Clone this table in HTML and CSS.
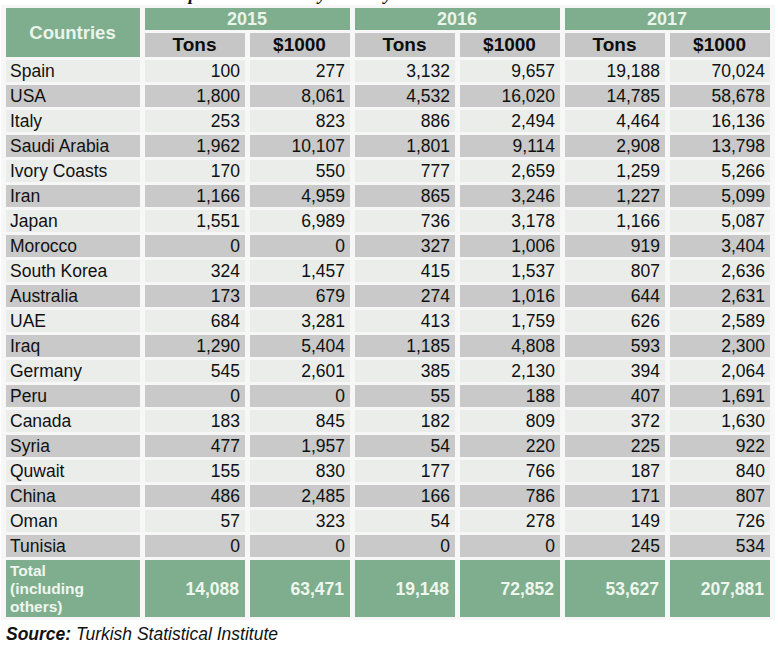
FILE: index.html
```html
<!DOCTYPE html>
<html>
<head>
<meta charset="utf-8">
<link rel="stylesheet" href="styles.css">
</head>
<body>
<div class="page">
  <div class="title"><span>Table 3. Exports and Value by Country</span></div>
  <table class="exports">
    <colgroup>
      <col class="col-country">
      <col class="col-data"><col class="col-data">
      <col class="col-data"><col class="col-data">
      <col class="col-data"><col class="col-data">
    </colgroup>
    <thead>
      <tr>
        <th rowspan="2" class="head-green countries">Countries</th>
        <th colspan="2" class="head-green year">2015</th>
        <th colspan="2" class="head-green year">2016</th>
        <th colspan="2" class="head-green year">2017</th>
      </tr>
      <tr class="sub">
        <th>Tons</th><th>$1000</th>
        <th>Tons</th><th>$1000</th>
        <th>Tons</th><th>$1000</th>
      </tr>
    </thead>
    <tbody>
      <tr class="light"><td>Spain</td><td>100</td><td>277</td><td>3,132</td><td>9,657</td><td>19,188</td><td>70,024</td></tr>
      <tr class="dark"><td>USA</td><td>1,800</td><td>8,061</td><td>4,532</td><td>16,020</td><td>14,785</td><td>58,678</td></tr>
      <tr class="light"><td>Italy</td><td>253</td><td>823</td><td>886</td><td>2,494</td><td>4,464</td><td>16,136</td></tr>
      <tr class="dark"><td>Saudi Arabia</td><td>1,962</td><td>10,107</td><td>1,801</td><td>9,114</td><td>2,908</td><td>13,798</td></tr>
      <tr class="light"><td>Ivory Coasts</td><td>170</td><td>550</td><td>777</td><td>2,659</td><td>1,259</td><td>5,266</td></tr>
      <tr class="dark"><td>Iran</td><td>1,166</td><td>4,959</td><td>865</td><td>3,246</td><td>1,227</td><td>5,099</td></tr>
      <tr class="light"><td>Japan</td><td>1,551</td><td>6,989</td><td>736</td><td>3,178</td><td>1,166</td><td>5,087</td></tr>
      <tr class="dark"><td>Morocco</td><td>0</td><td>0</td><td>327</td><td>1,006</td><td>919</td><td>3,404</td></tr>
      <tr class="light"><td>South Korea</td><td>324</td><td>1,457</td><td>415</td><td>1,537</td><td>807</td><td>2,636</td></tr>
      <tr class="dark"><td>Australia</td><td>173</td><td>679</td><td>274</td><td>1,016</td><td>644</td><td>2,631</td></tr>
      <tr class="light"><td>UAE</td><td>684</td><td>3,281</td><td>413</td><td>1,759</td><td>626</td><td>2,589</td></tr>
      <tr class="dark"><td>Iraq</td><td>1,290</td><td>5,404</td><td>1,185</td><td>4,808</td><td>593</td><td>2,300</td></tr>
      <tr class="light"><td>Germany</td><td>545</td><td>2,601</td><td>385</td><td>2,130</td><td>394</td><td>2,064</td></tr>
      <tr class="dark"><td>Peru</td><td>0</td><td>0</td><td>55</td><td>188</td><td>407</td><td>1,691</td></tr>
      <tr class="light"><td>Canada</td><td>183</td><td>845</td><td>182</td><td>809</td><td>372</td><td>1,630</td></tr>
      <tr class="dark"><td>Syria</td><td>477</td><td>1,957</td><td>54</td><td>220</td><td>225</td><td>922</td></tr>
      <tr class="light"><td>Quwait</td><td>155</td><td>830</td><td>177</td><td>766</td><td>187</td><td>840</td></tr>
      <tr class="dark"><td>China</td><td>486</td><td>2,485</td><td>166</td><td>786</td><td>171</td><td>807</td></tr>
      <tr class="light"><td>Oman</td><td>57</td><td>323</td><td>54</td><td>278</td><td>149</td><td>726</td></tr>
      <tr class="dark"><td>Tunisia</td><td>0</td><td>0</td><td>0</td><td>0</td><td>245</td><td>534</td></tr>
      <tr class="total"><td>Total<br>(including<br>others)</td><td>14,088</td><td>63,471</td><td>19,148</td><td>72,852</td><td>53,627</td><td>207,881</td></tr>
    </tbody>
  </table>
  <p class="source"><b>Source:</b> Turkish Statistical Institute</p>
</div>
</body>
</html>
```

FILE: styles.css
```css
html, body {
  margin: 0;
  padding: 0;
  background: #ffffff;
}

.page {
  width: 777px;
  padding-left: 1px;
  font-family: "Liberation Sans", Arial, sans-serif;
  color: #111111;
}

.title {
  height: 5px;
  overflow: hidden;
  font-family: "Liberation Serif", "Times New Roman", serif;
  font-weight: bold;
  font-style: italic;
  font-size: 18px;
  line-height: 18px;
  color: #111;
  padding-left: 104px;
}

.title span {
  display: block;
  margin-top: -15px;
  white-space: nowrap;
}

.exports {
  border-collapse: separate;
  border-spacing: 5px 3px;
  background: #f6f7f6;
  table-layout: fixed;
  width: 774px;
}

.col-country {
  width: 134px;
}

.col-data {
  width: 100px;
}

.exports th,
.exports td {
  padding: 0 5px 0 4px;
  overflow: hidden;
  white-space: nowrap;
}

.exports td {
  height: 22px;
  font-size: 17.5px;
  line-height: 22px;
  text-align: right;
}

.exports td:first-child {
  text-align: left;
}

.head-green {
  background: #7eae8e;
  color: #eaf4ea;
  font-weight: bold;
}

.countries {
  font-size: 18.5px;
  text-align: center;
}

.year {
  height: 22px;
  font-size: 18px;
  line-height: 22px;
  text-align: center;
}

.sub th {
  background: #c5c6c5;
  height: 24px;
  font-size: 19px;
  line-height: 24px;
  font-weight: bold;
  text-align: center;
  color: #0d0d0d;
}

.light td {
  background: #ebedeb;
}

.dark td {
  background: #c8c9c8;
}

.total td {
  background: #7eae8e;
  color: #eef6ee;
  font-weight: bold;
  height: 57px;
  padding-right: 6px;
}

.total td:first-child {
  font-size: 15.5px;
  line-height: 18px;
  vertical-align: middle;
}

.source {
  margin: 4px 0 0 5px;
  font-size: 17.5px;
  font-style: italic;
  color: #111;
}

.source b {
  font-weight: bold;
}
```
